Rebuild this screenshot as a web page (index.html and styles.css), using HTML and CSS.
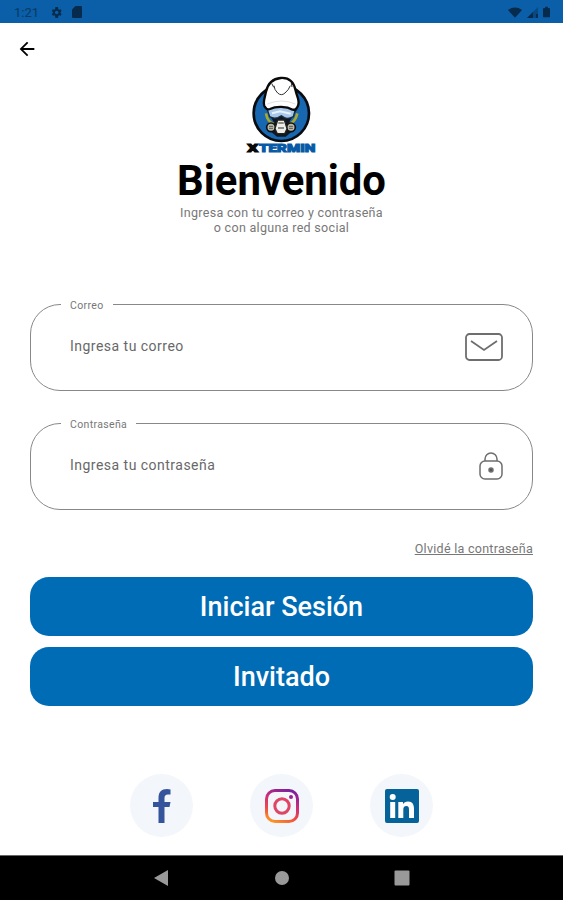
FILE: index.html
```html
<!DOCTYPE html>
<html lang="es">
<head>
    <meta charset="UTF-8">
    <title>Xtermin</title>
    <link rel="stylesheet" href="styles.css">
</head>
<body>

    <div class="status-bar">
        <span class="time">1:21</span>
        <svg class="status-gear" viewBox="0 0 24 24"><path fill-rule="evenodd" d="M19.4 13c.1-.7.1-1.300 0-2l2.100-1.600-2-3.500-2.500 1a8 8 0 0 0-1.700-1L14.900 2h-5l-.4 3.900a8 8 0 0 0-1.700 1l-2.500-1-2 3.500L5.400 11v2l-2.100 1.600 2 3.500 2.500-1a8 8 0 0 0 1.700 1l.4 3.900h5l.4-3.900a8 8 0 0 0 1.700-1l2.500 1 2-3.500zM12.400 8.700a3.300 3.300 0 1 1 0 6.600 3.300 3.300 0 0 1 0-6.600z"/></svg>
        <svg class="status-card" viewBox="0 0 10 12"><path d="M3.500 0H9a1 1 0 0 1 1 1v10a1 1 0 0 1-1 1H1a1 1 0 0 1-1-1V3.500z"/></svg>
        <div class="status-right">
            <svg width="14" height="11" viewBox="0 0 16 12"><path d="M0 3.200Q8-2.500 16 3.200L8 12z"/></svg>
            <svg width="11" height="11" viewBox="0 0 11 11"><path opacity=".4" d="M11 0v11H0z"/><path d="M6 5v6H0zM9 7h2v4H9z"/></svg>
            <svg width="7" height="12" viewBox="0 0 8 12"><path d="M2.500 0h3v1.500H7a1 1 0 0 1 1 1V11a1 1 0 0 1-1 1H1a1 1 0 0 1-1-1V2.500a1 1 0 0 1 1-1h1.500z"/></svg>
        </div>
    </div>

    <div class="toolbar">
        <svg class="back" viewBox="0 0 24 24"><path d="M20 11H7.830l5.590-5.590L12 4l-8 8 8 8 1.410-1.410L7.830 13H20z"/></svg>
    </div>

    <div class="header">
        <svg class="logo" viewBox="0 0 270 270">
            <circle cx="136" cy="130" r="83" fill="#1767b1" stroke="#080b10" stroke-width="8"/>
            <!-- mask and straps -->
            <path d="M91 118l22 38-10 28 20 16h26l20-16-8-30 24-38z" fill="#101722"/>
            <path d="M90 130q4 26 24 32M184 130q-6 26-26 34" fill="none" stroke="#a8a72e" stroke-width="8"/>
            <path d="M94 118q42-17 84 0l-6 22q-15 8-27 3l-9-6-10 6q-14 4-25-3z" fill="#a9c7e9" stroke="#172a42" stroke-width="4"/>
            <path d="M108 130l24-6 32 7" fill="none" stroke="#e7f2ff" stroke-width="6"/>
            <circle cx="105" cy="172" r="13" fill="#b9b9ae" stroke="#111" stroke-width="5"/>
            <circle cx="165" cy="172" r="13" fill="#b9b9ae" stroke="#111" stroke-width="5"/>
            <path d="M99 169h12M99 175h12M159 169h12M159 175h12" stroke="#55594f" stroke-width="3"/>
            <path d="M125 150h20l8 26-7 15h-22l-7-15z" fill="#eeeee8" stroke="#222" stroke-width="4"/>
            <path d="M127 159h16M126 174h18" stroke="#686b67" stroke-width="4"/>
            <!-- hood -->
            <path d="M85 108c-5-12 2-26 5-43 5-22 20-39 44-41 25-2 40 14 45 38 3 16 12 27 8 42-2 9-9 17-17 15-18-10-50-11-68-2-7 3-13-2-17-9z" fill="#fff" stroke="#090909" stroke-width="7"/>
            <path d="M114 47q1 13 11 22 11 10 22 0 11-9 16-22M107 40l6 12M166 39l2 12" fill="none" stroke="#333" stroke-width="3"/>
            <path d="M94 102q41-18 84 0" fill="none" stroke="#e0e0e0" stroke-width="3"/>
            <text class="logo-text" x="34" y="245" textLength="33" lengthAdjust="spacingAndGlyphs" fill="#080808" stroke="#080808">X</text>
            <text class="logo-text" x="69" y="245" textLength="169" lengthAdjust="spacingAndGlyphs" fill="#075aa5" stroke="#075aa5">TERMIN</text>
        </svg>
        <h1>Bienvenido</h1>
        <p>Ingresa con tu correo y contraseña<br>o con alguna red social</p>
    </div>

    <div class="form">
        <fieldset class="field">
            <legend>Correo</legend>
            <div class="field-row">
                <span class="hint">Ingresa tu correo</span>
                <svg class="mail" viewBox="0 0 38 28"><rect x="1" y="1" width="36" height="26" rx="3.500"/><path d="M6 8l13 9 13-9"/></svg>
            </div>
        </fieldset>
        <fieldset class="field">
            <legend>Contraseña</legend>
            <div class="field-row">
                <span class="hint">Ingresa tu contraseña</span>
                <svg class="lock" viewBox="0 0 24 28"><rect x="1" y="9" width="22" height="18" rx="5"/><path d="M6 9V7a6 6 0 0 1 12 0v2"/><circle cx="12" cy="18" r="2"/></svg>
            </div>
        </fieldset>
        <a class="forgot">Olvidé la contraseña</a>
        <button>Iniciar Sesión</button>
        <button>Invitado</button>
    </div>

    <div class="social">
        <div class="social-item">
            <svg width="18" height="34" viewBox="0 0 18 34"><path fill="#36549c" d="M5.500 34V18H0v-5h5.500V9c0-6 3-9 8.500-9 1.500 0 2.500.2 3.500.5v5h-2.500c-2.500 0-3.500 1.300-3.500 3.500v4h6l-1 5h-5v16z"/></svg>
        </div>
        <div class="social-item">
            <svg width="34" height="34" viewBox="0 0 34 34">
                <defs>
                    <linearGradient id="insta" x1=".3" y1="1" x2=".7" y2="0">
                        <stop offset="0" stop-color="#fb9823"/>
                        <stop offset=".3" stop-color="#ef4a43"/>
                        <stop offset=".6" stop-color="#cf2d7b"/>
                        <stop offset="1" stop-color="#79209d"/>
                    </linearGradient>
                </defs>
                <path fill="url(#insta)" fill-rule="evenodd" d="M10 0h14a10 10 0 0 1 10 10v14a10 10 0 0 1-10 10H10A10 10 0 0 1 0 24V10A10 10 0 0 1 10 0zM10 3a7 7 0 0 0-7 7v14a7 7 0 0 0 7 7h14a7 7 0 0 0 7-7V10a7 7 0 0 0-7-7z"/>
                <circle cx="17" cy="17" r="7.200" fill="none" stroke="#df4565" stroke-width="3"/>
                <circle cx="26" cy="8" r="2" fill="#9c218f"/>
            </svg>
        </div>
        <div class="social-item">
            <svg width="34" height="34" viewBox="0 0 34 34"><rect width="34" height="34" rx="2" fill="#066399"/><g fill="#fff"><circle cx="7.700" cy="8" r="3"/><path d="M5.200 13h5v16h-5zM13.300 13H18v2.200c1-1.600 2.700-2.600 5-2.600 4.600 0 6 3 6 7.400v9h-5v-8c0-2.400-.4-4-2.600-4-2.300 0-3.100 1.600-3.100 4v8h-5z"/></g></svg>
        </div>
    </div>

    <div class="nav-bar">
        <svg viewBox="0 0 16 16"><path d="M0 8l14-8v16z"/></svg>
        <svg viewBox="0 0 16 16"><circle cx="8" cy="8" r="7"/></svg>
        <svg viewBox="0 0 16 16"><rect x=".5" y=".5" width="15" height="15" rx="1"/></svg>
    </div>

</body>
</html>
```
FILE: styles.css
```css
* {
    box-sizing: border-box;
}

body {
    margin: 0;
    height: 900px;
    display: flex;
    flex-direction: column;
    background-color: #fff;
    font-family: Roboto, sans-serif;
    overflow: hidden;
}

svg {
    display: block;
    flex: none;
}

.status-bar {
    height: 23px;
    padding: 1px 13px 0 14px;
    display: flex;
    align-items: center;
    background-color: #0b5ea8;
    color: #073963;
    fill: #062b4c;
}

.time {
    width: 36px;
    font-size: 13px;
}

.status-gear {
    width: 13px;
    height: 13px;
}

.status-card {
    width: 10px;
    height: 12px;
    margin-left: 9px;
}

.status-right {
    display: flex;
    align-items: center;
    gap: 5px;
    margin-left: auto;
}

.toolbar {
    height: 47px;
    padding: 15px 16px;
}

.back {
    width: 22px;
    height: 22px;
}

.header {
    display: flex;
    flex-direction: column;
    align-items: center;
    text-align: center;
}

.logo {
    width: 90px;
    height: 90px;
    margin-right: 1px;
}

.logo-text {
    font-size: 35px;
    font-weight: 900;
    stroke-width: 3px;
}

h1 {
    margin: -4px 0 0;
    font-size: 41.8px;
    line-height: 50px;
    font-weight: 700;
}

.header p {
    margin: -1px 0 0;
    font-size: 12.5px;
    line-height: 15px;
    letter-spacing: 0.31px;
    color: #777;
}

.form {
    margin: 64px 30px 0;
    display: flex;
    flex-direction: column;
}

.field {
    height: 92px;
    margin: 0 0 27px;
    padding: 0 29px 0 39px;
    border: 1px solid #888;
    border-radius: 30px;
    min-width: 0;
}

.field legend {
    height: 10px;
    margin-left: -9px;
    padding: 0 9px;
    font-size: 10.5px;
    line-height: 14px;
    letter-spacing: 0.35px;
    color: #777;
}

.field-row {
    height: 75px;
    display: flex;
    align-items: center;
    justify-content: space-between;
}

.hint {
    margin-top: -2px;
    font-size: 14px;
    letter-spacing: 0.48px;
    color: #686868;
}

.mail,
.lock {
    fill: none;
    stroke: #6e6e6e;
    stroke-width: 1.8;
}

.mail {
    width: 38px;
    height: 28px;
}

.lock {
    width: 24px;
    height: 28px;
    stroke-width: 1.5;
}

.lock circle {
    fill: #555;
}

.forgot {
    align-self: flex-end;
    margin: 4px 0 20px;
    font-size: 12.5px;
    line-height: 16px;
    letter-spacing: 0.28px;
    color: #777;
    text-decoration: underline;
}

button {
    height: 59px;
    margin: 0 0 11px;
    padding: 0;
    border: none;
    border-radius: 19px;
    background-color: #006cb5;
    color: #fff;
    font-family: inherit;
    font-size: 27px;
    font-weight: 500;
}

.social {
    display: flex;
    justify-content: center;
    gap: 57px;
    margin-top: 57px;
}

.social-item {
    width: 63px;
    height: 63px;
    display: flex;
    align-items: center;
    justify-content: center;
    border-radius: 50%;
    background-color: #f3f6fa;
}

.nav-bar {
    height: 45px;
    margin-top: auto;
    display: flex;
    align-items: center;
    justify-content: center;
    gap: 104px;
    border-top: 1px solid #666;
    background-color: #000;
}

.nav-bar svg {
    width: 16px;
    height: 16px;
    fill: #999;
}
```
